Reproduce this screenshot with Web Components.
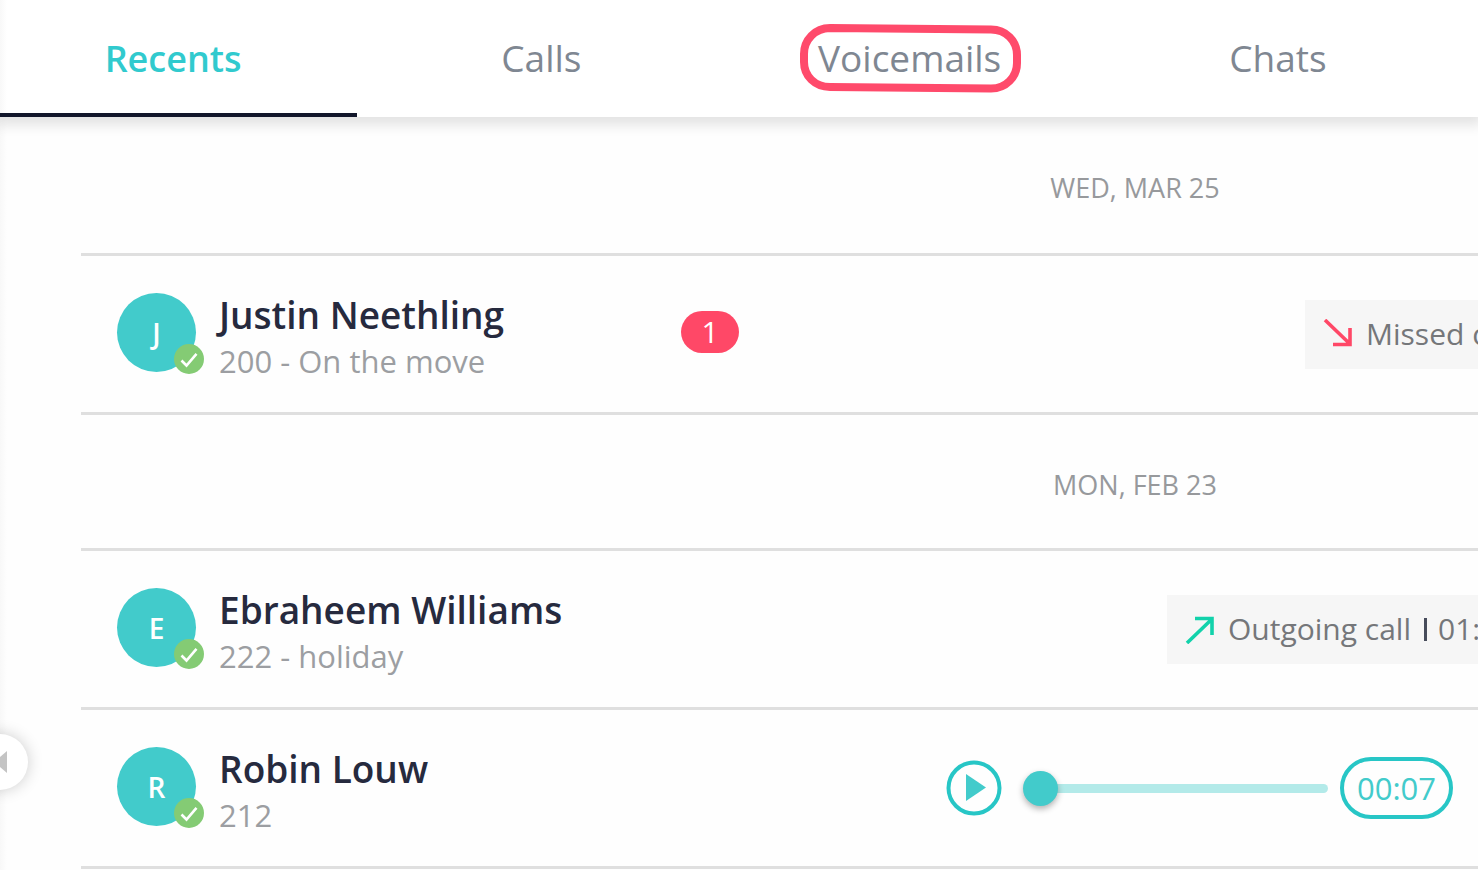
<!DOCTYPE html>
<html lang="en">
<head>
<meta charset="utf-8">
<title>Recents</title>
<style>
  body { margin: 0; background: #fefefe; font-family: "Open Sans", "Noto Sans", sans-serif; color: #262a3e; overflow-x: hidden; }
</style>
</head>
<body>
<phone-app>
  <tab-strip slot="tabs">
    <tab-item active>Recents</tab-item>
    <tab-item>Calls</tab-item>
    <tab-item ringed>Voicemails</tab-item>
    <tab-item>Chats</tab-item>
  </tab-strip>
  <day-heading>WED, MAR 25</day-heading>
  <contact-row initial="J">
    <span slot="name">Justin Neethling</span>
    <span slot="detail">200 - On the move</span>
    <count-pill slot="count">1</count-pill>
    <call-chip kind="missed" slot="meta">Missed call</call-chip>
  </contact-row>
  <day-heading ruled>MON, FEB 23</day-heading>
  <contact-row initial="E">
    <span slot="name">Ebraheem Williams</span>
    <span slot="detail">222 - holiday</span>
    <call-chip kind="outgoing" slot="meta">Outgoing call<span slot="time">01:</span></call-chip>
  </contact-row>
  <contact-row initial="R" last>
    <span slot="name">Robin Louw</span>
    <span slot="detail">212</span>
    <voice-player slot="meta">00:07</voice-player>
  </contact-row>
</phone-app>

<script>
const define = (name, html, setup) => {
  const template = document.createElement('template');
  template.innerHTML = html;
  customElements.define(name, class extends HTMLElement {
    constructor() {
      super();
      this.attachShadow({ mode: 'open' }).append(template.content.cloneNode(true));
    }
    connectedCallback() { if (setup) setup(this, this.shadowRoot); }
  });
};

define('phone-app', `
  <style>
    :host { display: block; position: relative; min-height: 100vh; overflow: hidden; box-sizing: border-box;
            background: linear-gradient(to right, #f8f8f8, #fefefe 7px); }
    main { margin-left: 81px; }
    .collapse { position: absolute; left: -28px; top: 734px; width: 56px; height: 56px; padding: 0; border: 0;
                border-radius: 50%; background: #fff; box-shadow: 0 0 16px rgba(0,0,0,.2); }
    .collapse svg { display: block; }
  </style>
  <slot name="tabs"></slot>
  <main><slot></slot></main>
  <button class="collapse" aria-label="Collapse panel">
    <svg width="56" height="56" viewBox="0 0 56 56"><path d="M35 17v22L22 28z" fill="#c4c4c4"/></svg>
  </button>`);

define('tab-strip', `
  <style>
    :host { display: block; position: relative; z-index: 1; box-shadow: 0 4px 12px 4px rgba(0,0,0,.11);
            background: linear-gradient(to right, #f8f8f8, #fff 7px); }
    nav { display: grid; grid-template-columns: repeat(4, 1fr); height: 117px; margin: 0 16px 0 -11px; }
  </style>
  <nav aria-label="History"><slot></slot></nav>`);

define('tab-item', `
  <style>
    :host { display: block; }
    a { display: flex; align-items: center; justify-content: center; height: 100%; box-sizing: border-box; padding-top: 2px;
        border-bottom: 4px solid transparent; color: #7f8792; font-size: 37px; line-height: 48px; text-decoration: none; }
    :host([active]) a { color: #31cace; font-weight: 600; font-size: 36px; padding-top: 4px; border-color: #12172b; }
    span { position: relative; }
    svg { display: none; }
    :host([ringed]) svg { display: block; position: absolute; left: 50%; top: 50%; margin: -34px 0 0 -110px; overflow: visible; }
  </style>
  <a href="#"><span><slot></slot>
    <svg width="221" height="70" viewBox="0 0 221 70" fill="none" stroke="#ff4a6b" stroke-width="8" aria-hidden="true">
      <path d="M30 4 L191 5.500 C206 5.500 217 17 217 31 V39 C217 53 206 64.500 191 64.500 L30 63 C15 63 4 52 4 38 V30 C4 16 15 4 30 4 Z"/>
    </svg></span></a>`);

define('day-heading', `
  <style>
    :host { display: block; }
    h2 { display: flex; align-items: center; justify-content: center; margin: 0; height: 136px; box-sizing: border-box;
         padding: 6px 0 0 711px; font-size: 27px; line-height: 36px; font-weight: 400; color: #97999c; white-space: nowrap; }
    :host([ruled]) h2 { border-top: 3px solid #dfdfdf; }
  </style>
  <h2><slot></slot></h2>`);

define('contact-row', `
  <style>
    :host { display: block; border-top: 3px solid #dfdfdf; }
    :host([last]) { border-bottom: 3px solid #dfdfdf; }
    article { display: flex; align-items: center; height: 156px; padding-left: 36px; }
    .avatar { position: relative; flex: none; display: grid; place-items: center; width: 79px; height: 79px; margin-bottom: 3px;
              border-radius: 50%; background: #42cbcb; color: #fff; font-size: 28px; line-height: 36px; }
    .avatar b { font-weight: 600; }
    .avatar svg { position: absolute; right: -8px; bottom: -2px; }
    .who { flex: 0 0 462px; margin-left: 23px; padding-top: 7px; white-space: nowrap; }
    h3, p { margin: 0; line-height: 46px; }
    h3 { font-size: 37px; font-weight: 600; color: #262a3e; }
    p { font-size: 31px; color: #9c9ea2; }
    .meta { margin-left: auto; min-width: 0; }
  </style>
  <article>
    <div class="avatar"><b></b>
      <svg width="30" height="30" viewBox="0 0 30 30" role="img" aria-label="Available">
        <circle cx="15" cy="15" r="15" fill="#84cb74"/>
        <path d="M7.500 16.500l5 5L22.500 9.800" fill="none" stroke="#fff" stroke-width="2.600"/>
      </svg>
    </div>
    <div class="who"><h3><slot name="name"></slot></h3><p><slot name="detail"></slot></p></div>
    <slot name="count"></slot>
    <div class="meta"><slot name="meta"></slot></div>
  </article>`, (host, root) => { root.querySelector('b').textContent = host.getAttribute('initial'); });

define('count-pill', `
  <style>
    :host { display: block; margin-bottom: 5px; width: 58px; border-radius: 21px; background: #ff4867; color: #fff;
            font-size: 30px; line-height: 42px; text-align: center; }
  </style>
  <slot></slot>`);

define('call-chip', `
  <style>
    :host { display: flex; align-items: center; box-sizing: border-box; width: 173px; height: 69px; padding-left: 18px;
            overflow: hidden; background: #f6f6f6; color: #75777a; font-size: 30px; line-height: 40px; white-space: nowrap; }
    :host([kind="outgoing"]) { width: 311px; }
    svg { flex: none; margin-right: 13px; color: #ff4867; }
    :host([kind="outgoing"]) svg { color: #12d2ab; transform: scaleY(-1); }
    .time { display: none; align-items: center; margin-left: 13px; }
    :host([kind="outgoing"]) .time { display: flex; }
    .time::before { content: ""; width: 3px; height: 23px; margin-right: 11px; background: #474c5b; }
  </style>
  <svg width="30" height="30" viewBox="0 0 30 30" fill="none" stroke="currentColor" stroke-width="3.600" aria-hidden="true">
    <path d="M2 1L27 25M27 9V25.500H10"/>
  </svg>
  <slot></slot><span class="time"><slot name="time"></slot></span>`);

define('voice-player', `
  <style>
    :host { display: flex; align-items: center; margin-right: 25px; }
    button { width: 56px; height: 56px; padding: 0; border: 0; background: none; }
    svg { display: block; }
    input { appearance: none; -webkit-appearance: none; width: 305px; height: 36px; margin: 0 12px 0 21px; background: none; }
    input::-webkit-slider-runnable-track { height: 9px; border-radius: 5px; background: linear-gradient(to right, transparent 18px, #b3eae9 18px); }
    input::-webkit-slider-thumb { -webkit-appearance: none; width: 35px; height: 35px; margin-top: -13px; border-radius: 50%;
            background: #42cbcb; box-shadow: 0 3px 6px rgba(0,0,0,.3); }
    output { box-sizing: border-box; width: 113px; height: 62px; border: 4px solid #27c6c6; border-radius: 31px;
             color: #42cbcb; font-size: 31px; line-height: 54px; text-align: center; }
  </style>
  <button aria-label="Play voicemail">
    <svg width="56" height="56" viewBox="0 0 56 56"><circle cx="28" cy="28" r="25.500" fill="none" stroke="#27c6c6" stroke-width="4"/><path d="M20 14v27l20-13.500z" fill="#42cbcb"/></svg>
  </button>
  <input type="range" min="0" max="7" value="0" aria-label="Voicemail position">
  <output><slot></slot></output>`);
</script>
</body>
</html>
